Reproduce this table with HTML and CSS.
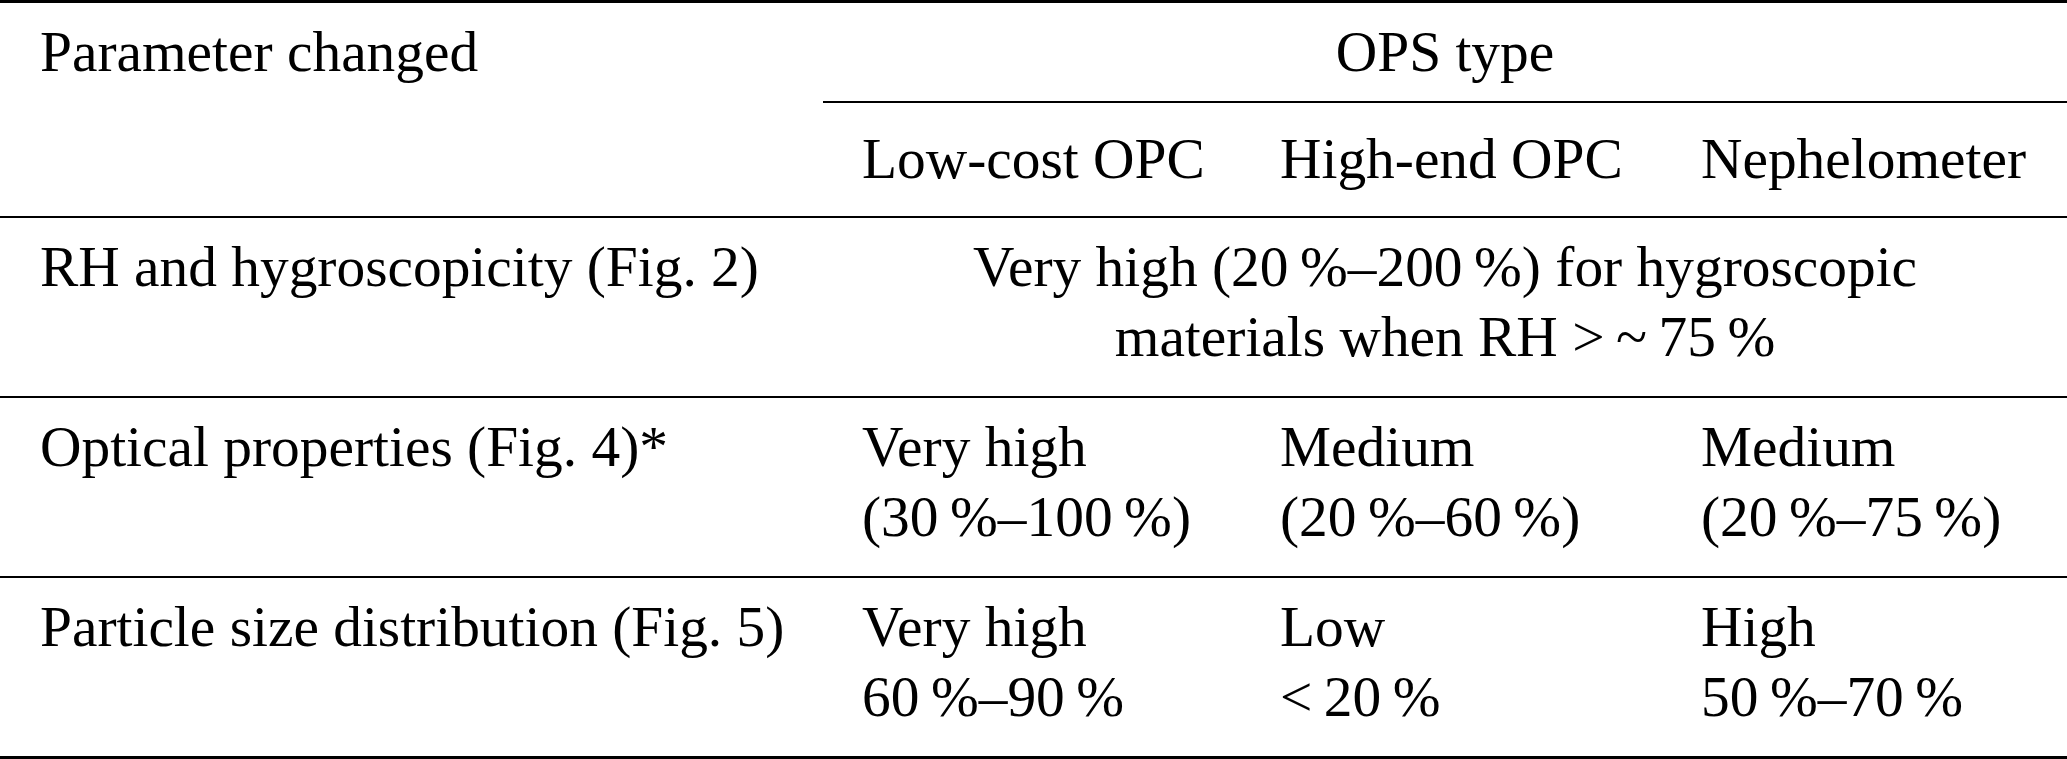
FILE: index.html
```html
<!DOCTYPE html>
<html lang="en">
<head>
<meta charset="utf-8">
<title>OPS type sensitivity</title>
<link rel="stylesheet" href="styles.css">
</head>
<body>
<table class="ops-table">
  <colgroup>
    <col class="c-param">
    <col class="c-low">
    <col class="c-high">
    <col class="c-neph">
  </colgroup>
  <thead>
    <tr class="head-top">
      <th class="param">Parameter changed</th>
      <th class="group" colspan="3">OPS type</th>
    </tr>
    <tr class="head-sub">
      <th class="param"></th>
      <th>Low-cost OPC</th>
      <th>High-end OPC</th>
      <th>Nephelometer</th>
    </tr>
  </thead>
  <tbody>
    <tr>
      <td class="param">RH and hygroscopicity (Fig. 2)</td>
      <td class="span" colspan="3">Very high (20&thinsp;%–200&thinsp;%) for hygroscopic<br>materials when RH &gt;&thinsp;~&thinsp;75&thinsp;%</td>
    </tr>
    <tr>
      <td class="param">Optical properties (Fig. 4)*</td>
      <td>Very high<br>(30&thinsp;%–100&thinsp;%)</td>
      <td>Medium<br>(20&thinsp;%–60&thinsp;%)</td>
      <td>Medium<br>(20&thinsp;%–75&thinsp;%)</td>
    </tr>
    <tr>
      <td class="param">Particle size distribution (Fig. 5)</td>
      <td>Very high<br>60&thinsp;%–90&thinsp;%</td>
      <td>Low<br>&lt;&thinsp;20&thinsp;%</td>
      <td>High<br>50&thinsp;%–70&thinsp;%</td>
    </tr>
  </tbody>
</table>
</body>
</html>
```

FILE: styles.css
```css
html, body {
  margin: 0;
  padding: 0;
  background: #ffffff;
}

body {
  font-family: "Liberation Serif", "Times New Roman", serif;
  color: #000000;
}

.ops-table {
  width: 2067px;
  table-layout: fixed;
  border-collapse: separate;
  border-spacing: 0;
  border-top: 3px solid #000000;
  border-bottom: 3px solid #000000;
  font-size: 57.4px;
  line-height: 70px;
}

.c-param { width: 823px; }
.c-low   { width: 418px; }
.c-high  { width: 421px; }
.c-neph  { width: 405px; }

.ops-table th,
.ops-table td {
  font-weight: normal;
  text-align: left;
  vertical-align: top;
  white-space: nowrap;
  padding: 14px 39px 24px 39px;
}

.ops-table .param {
  padding-left: 40px;
}

.head-top th {
  padding-top: 14px;
  padding-bottom: 14px;
}

.head-top .group {
  text-align: center;
  border-bottom: 2px solid #000000;
}

.head-sub th {
  padding-top: 21px;
  padding-bottom: 22px;
  border-bottom: 2px solid #000000;
}

.ops-table tbody tr:not(:last-child) td {
  border-bottom: 2px solid #000000;
}

.ops-table .span {
  text-align: center;
}
```
